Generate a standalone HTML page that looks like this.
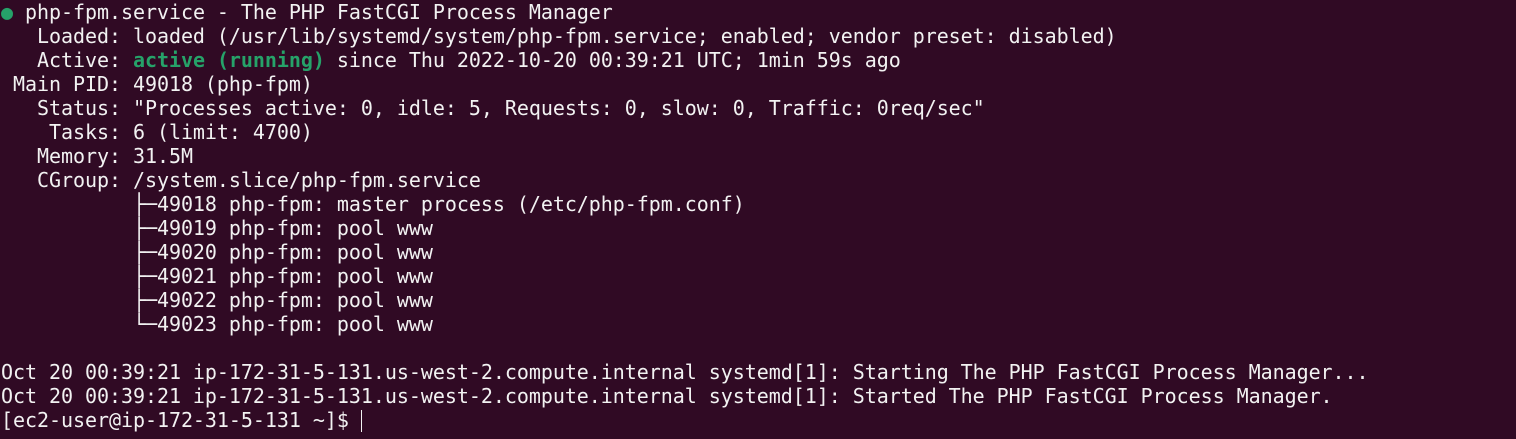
<!DOCTYPE html>
<html><head><meta charset="utf-8"><style>
html,body{margin:0;padding:0;background:#300a24;width:1516px;height:439px;overflow:hidden}
pre{margin:0;padding:0 0 0 1px;font-family:"DejaVu Sans Mono","Liberation Mono",monospace;font-size:20px;line-height:24px;letter-spacing:-0.045px;color:#f2f2f2;white-space:pre}
.g{color:#26a269;font-weight:bold}
.d{color:#26a269}
.cur{display:inline-block;width:1px;height:22px;background:#f2f2f2;vertical-align:-5px}
</style></head><body><pre><span class="d">●</span> php-fpm.service - The PHP FastCGI Process Manager
   Loaded: loaded (/usr/lib/systemd/system/php-fpm.service; enabled; vendor preset: disabled)
   Active: <span class="g">active (running)</span> since Thu 2022-10-20 00:39:21 UTC; 1min 59s ago
 Main PID: 49018 (php-fpm)
   Status: "Processes active: 0, idle: 5, Requests: 0, slow: 0, Traffic: 0req/sec"
    Tasks: 6 (limit: 4700)
   Memory: 31.5M
   CGroup: /system.slice/php-fpm.service
           ├─49018 php-fpm: master process (/etc/php-fpm.conf)
           ├─49019 php-fpm: pool www
           ├─49020 php-fpm: pool www
           ├─49021 php-fpm: pool www
           ├─49022 php-fpm: pool www
           └─49023 php-fpm: pool www

Oct 20 00:39:21 ip-172-31-5-131.us-west-2.compute.internal systemd[1]: Starting The PHP FastCGI Process Manager...
Oct 20 00:39:21 ip-172-31-5-131.us-west-2.compute.internal systemd[1]: Started The PHP FastCGI Process Manager.
[ec2-user@ip-172-31-5-131 ~]$ <span class="cur"></span></pre></body></html>
